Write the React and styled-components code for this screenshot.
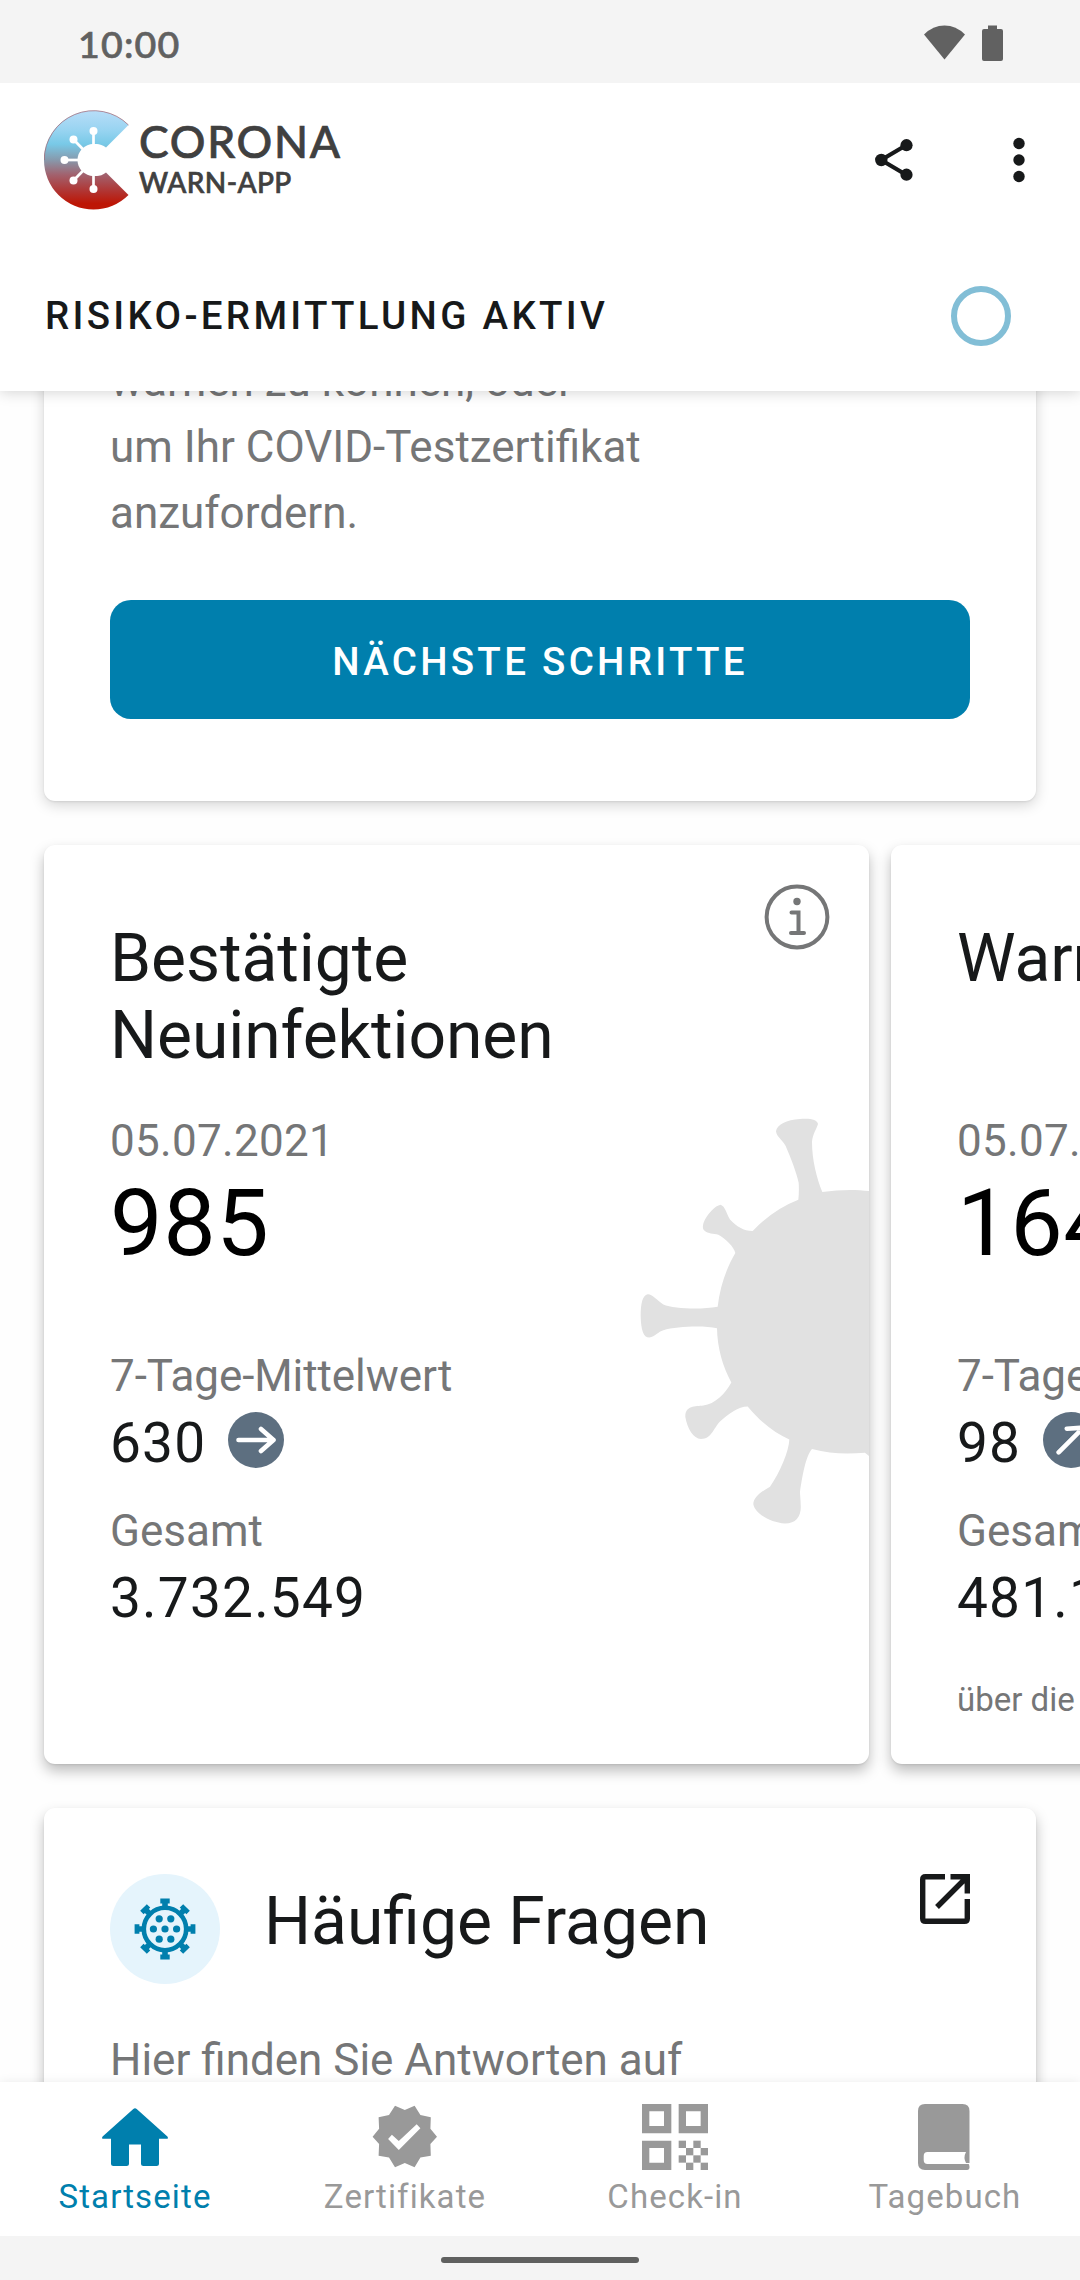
import React from 'react';
import styled, { createGlobalStyle, css } from 'styled-components';

const GlobalStyle = createGlobalStyle`
  * { box-sizing: border-box; }
  body { margin: 0; background: #fefefe; font-family: Roboto, "Noto Sans", sans-serif; color: #17191a; }
  h2, p { margin: 0; font-weight: 400; }
  svg { display: block; flex: none; }
`;

const Screen = styled.div`
  width: 1080px;
  height: 2280px;
  display: flex;
  flex-direction: column;
  overflow: hidden;
  background: #fefefe;
`;

const Header = styled.header`
  position: relative;
  z-index: 2;
  flex: none;
  background: #fff;
  box-shadow: 0 1px 14px rgba(0, 0, 0, 0.18);
`;

const StatusBar = styled.div`
  height: 83px;
  padding: 5px 77px 0 78px;
  background: #f4f4f4;
  display: flex;
  align-items: center;
  justify-content: space-between;
`;

const Clock = styled.span`
  font: 500 37.5px/44px Lato, sans-serif;
  color: #616161;
  letter-spacing: 1.2px;
  -webkit-text-stroke: 0.7px #616161;
`;

const StatusIcons = styled.div`
  display: flex;
  gap: 17px;
  margin-top: -3px;
`;

const Toolbar = styled.div`
  height: 154px;
  padding: 0 55px 0 44px;
  display: flex;
  align-items: center;
`;

const Wordmark = styled.div`
  margin-left: 8px;
  flex: 1;
  display: flex;
  flex-direction: column;
  color: #404040;
  font-family: Lato, sans-serif;
  font-weight: 500;
  -webkit-text-stroke: 0.7px #404040;
`;

const WordmarkTop = styled.span`
  font-size: 44.5px;
  line-height: 46px;
  letter-spacing: 1.7px;
  margin: -5px 0 3px;
`;

const WordmarkBottom = styled.span`
  font-size: 28px;
  line-height: 30px;
  letter-spacing: 0.4px;
`;

const ToolbarActions = styled.div`
  display: flex;
  align-items: center;
  gap: 100px;
`;

const RiskRow = styled.div`
  height: 154px;
  padding: 3px 69px 0 45px;
  display: flex;
  align-items: center;
  justify-content: space-between;
  font-size: 38.5px;
  font-weight: 500;
  line-height: 45px;
  letter-spacing: 3.3px;
`;

const Ring = styled.span`
  width: 60px;
  height: 60px;
  border: 6.5px solid #82bed6;
  border-radius: 50%;
`;

const Content = styled.main`
  flex: 1;
  min-height: 0;
  overflow: hidden;
  display: flex;
  flex-direction: column;
  gap: 44px;
`;

const Card = styled.section`
  flex: none;
  background: #fff;
  border-radius: 11px;
  box-shadow: 0 ${(p) => p.$drop || 5}px 14px rgba(0, 0, 0, ${(p) => p.$shade || 0.2}), 0 1px 2px rgba(0, 0, 0, 0.08);
`;

const TestCard = styled(Card)`
  margin: -60px 44px 0;
  padding: 17px 66px 82px;
`;

const Body = styled.p`
  font-size: 44px;
  line-height: 66px;
  color: #757677;
  white-space: pre-line;
  letter-spacing: ${(p) => p.$spacing || 0}px;
  font-variant-ligatures: common-ligatures;
`;

const Button = styled.button`
  display: block;
  width: 100%;
  height: 119px;
  margin-top: 54px;
  padding: 4px 0 0;
  border: 0;
  border-radius: 21px;
  background: #007fad;
  color: #fff;
  font: 500 38.5px/45px Roboto, sans-serif;
  letter-spacing: 3.3px;
`;

const Carousel = styled.div`
  flex: none;
  display: flex;
  gap: 22px;
  padding-left: 44px;
`;

const StatCard = styled(Card)`
  position: relative;
  width: 825px;
  height: 919px;
  padding: 75px 66px 0;
`;

const titleText = css`
  font-size: 66px;
  line-height: 77px;
  color: #17191a;
`;

const StatTitle = styled.h2`
  ${titleText}
  height: 154px;
  margin-bottom: 41px;
  white-space: pre-line;
  letter-spacing: -0.08px;
`;

const Label = styled.p`
  font-size: 44px;
  line-height: 52px;
  color: #757677;
  letter-spacing: ${(p) => p.$spacing || 0}px;
`;

const BigNumber = styled.p`
  margin: 1px 0 72px;
  font-size: 93.5px;
  line-height: 110px;
  letter-spacing: 0.6px;
  color: #000;
`;

const ValueRow = styled.div`
  display: flex;
  align-items: flex-start;
  gap: 21.5px;
  height: 64px;
  margin: 9px 0 30px;
  font-size: 55px;
  line-height: 64px;
  letter-spacing: 1.2px;
`;

const TrendBadge = styled.span`
  flex: none;
  width: 56px;
  height: 56px;
  margin-top: 1px;
  border-radius: 50%;
  background: #5d6f80;
  svg { transform: rotate(${(p) => p.$angle}deg); }
`;

const Footnote = styled.p`
  padding-top: 20px;
  font-size: 33px;
  line-height: 39px;
  color: #757677;
  white-space: nowrap;
`;

const InfoButton = styled.span`
  position: absolute;
  top: 39px;
  right: 39px;
`;

const CardArt = styled.span`
  position: absolute;
  top: 269px;
  right: 0;
`;

const FaqCard = styled(Card)`
  margin: 0 44px;
  padding: 66px 66px 80px;
`;

const FaqHead = styled.div`
  display: flex;
  align-items: flex-start;
  gap: 44px;
  margin-bottom: 43px;
`;

const FaqIcon = styled.span`
  width: 110px;
  height: 110px;
  border-radius: 50%;
  background: #e5f4fc;
`;

const FaqTitle = styled.h2`
  ${titleText}
  flex: 1;
  margin-top: 9px;
`;

const Nav = styled.nav`
  position: relative;
  z-index: 2;
  flex: none;
  height: 154px;
  display: grid;
  grid-template-columns: repeat(4, 1fr);
  background: #fff;
  box-shadow: 0 0 10px rgba(0, 0, 0, 0.08);
`;

const NavItem = styled.div`
  display: flex;
  flex-direction: column;
  align-items: center;
  padding-top: 22px;
  gap: 7px;
  color: ${(p) => (p.$active ? '#007fad' : '#999')};
  font-size: 33px;
  line-height: 39px;
  letter-spacing: 1.1px;
`;

const GestureBar = styled.div`
  position: relative;
  z-index: 3;
  flex: none;
  height: 44px;
  display: flex;
  align-items: center;
  justify-content: center;
  background: #f4f4f4;
`;

const Handle = styled.span`
  width: 198px;
  height: 6px;
  margin-top: 4px;
  border-radius: 3px;
  background: #5f605f;
`;

const WifiIcon = () => (
  <svg width="41" height="36" viewBox="0 0 41 36">
    <path d="M20.5 34.5 0 9.5Q9 .5 20.5 .5T41 9.5Z" fill="#616161" />
  </svg>
);

const BatteryIcon = () => (
  <svg width="21" height="36" viewBox="0 0 21 36">
    <path d="M6 .5h9v3.5h4q2 0 2 2V34q0 2-2 2H2q-2 0-2-2V6q0-2 2-2h4Z" fill="#616161" />
  </svg>
);

const logoSpikes = [[49.5, 21], [29.5, 29.5], [20.5, 50], [29.5, 70.5], [49.5, 79]];

const LogoMark = () => (
  <svg width="87" height="100" viewBox="0 0 87 100">
    <defs>
      <linearGradient id="logo" x1="0" y1="0" x2="0" y2="1">
        <stop offset="0" stopColor="#b8ddf8" />
        <stop offset="0.2" stopColor="#98d4f1" />
        <stop offset="0.34" stopColor="#78c9e7" />
        <stop offset="0.5" stopColor="#8799ac" />
        <stop offset="0.65" stopColor="#a2616d" />
        <stop offset="0.82" stopColor="#b13330" />
        <stop offset="0.94" stopColor="#bd1605" />
        <stop offset="1" stopColor="#bd1605" />
      </linearGradient>
    </defs>
    <path d="M84.5 15A49.5 49.5 0 1 0 84.5 85L62 62.5A16 16 0 1 1 62 37.5Z" fill="url(#logo)" />
    <path d="M84.5 15A49.5 49.5 0 0 0 .2 50" fill="none" stroke="#a4636f" strokeWidth=".7" />
    <g stroke="#fff" strokeWidth="2.7" fill="#fff">
      {logoSpikes.map(([x, y]) => (
        <g key={`${x}-${y}`}>
          <path d={`M49.5 50 ${x} ${y}`} />
          <circle cx={x} cy={y} r="4" stroke="none" />
        </g>
      ))}
    </g>
    <circle cx="49.5" cy="50" r="16" fill="#fff" />
  </svg>
);

const ShareIcon = () => (
  <svg width="38" height="42" viewBox="0 0 38 42" fill="#17191a">
    <path d="M31.5 6 6.2 21l25.3 15" fill="none" stroke="#17191a" strokeWidth="4.2" />
    <circle cx="31.5" cy="6.2" r="6.1" />
    <circle cx="6.3" cy="21" r="6.2" />
    <circle cx="31.5" cy="35.7" r="6.1" />
  </svg>
);

const MoreIcon = () => (
  <svg width="12" height="46" viewBox="0 0 12 46" fill="#17191a">
    <circle cx="6" cy="6.5" r="5.7" />
    <circle cx="6" cy="23" r="5.7" />
    <circle cx="6" cy="39.5" r="5.7" />
  </svg>
);

const InfoIcon = () => (
  <svg width="66" height="66" viewBox="0 0 66 66" fill="none" stroke="#757677" strokeWidth="4">
    <circle cx="33" cy="33" r="30.4" />
    <circle cx="33" cy="17.5" r="3.7" fill="#757677" stroke="none" />
    <path d="M27.5 28.500h7v20M27 49h13" strokeLinecap="round" />
  </svg>
);

const VirusArt = () => (
  <svg width="229" height="412" viewBox="0 0 229 412">
    <g transform="translate(-40 -294) scale(.33333 .4592)">
      <path
        fill="#e1e1e1"
        d="M667 810C650 780 636 740 636 700C638 685 650 672 654 662C652 652 630 649 600 651C560 653 530 663 528 678C530 690 545 695 557 710C575 740 590 770 596 790C597 800 597 815 595 827Q520 848 458 895C430 895 410 885 390 870C378 855 376 842 362 838C345 840 325 857 315 870C308 880 306 890 313 894C325 902 340 900 355 903C375 910 403 930 406 943C380 975 360 1015 353 1060C300 1067 220 1064 190 1055C170 1045 155 1032 143 1033C127 1035 122 1055 122 1080C123 1110 130 1127 148 1127C165 1125 175 1114 190 1111C230 1103 310 1100 351 1107C352 1150 368 1190 394 1225C375 1250 345 1272 310 1275C285 1277 255 1275 256 1300C262 1325 280 1347 303 1348C335 1348 340 1325 360 1310C385 1293 415 1277 443 1277C480 1310 525 1335 568 1349C567 1375 540 1420 510 1452C485 1462 460 1475 460 1490C465 1510 510 1530 555 1532C590 1532 605 1515 602 1490C602 1480 600 1470 600 1463C607 1430 617 1385 636 1370C690 1381 745 1381 795 1378L807 1385V808C765 804 715 805 667 810Z"
      />
    </g>
  </svg>
);

const ArrowIcon = () => (
  <svg width="56" height="56" viewBox="0 0 56 56" fill="none" stroke="#fff" strokeWidth="4.6" strokeLinecap="round" strokeLinejoin="round">
    <path d="M10.5 28h35M33 17l12.5 11L33 39" />
  </svg>
);

const knobAngles = [0, 45, 90, 135, 180, 225, 270, 315];
const virusDots = [[0, 0], [-11.6, 0], [11.6, 0], [-5.8, -10.2], [5.8, -10.2], [-5.8, 10.2], [5.8, 10.2]];

const VirusIcon = () => (
  <svg width="110" height="110" viewBox="-55 -55 110 110" fill="#007fad">
    <circle r="21.2" fill="none" stroke="#007fad" strokeWidth="4.6" />
    {knobAngles.map((a) => (
      <path key={a} transform={`rotate(${a})`} d="M-4.7-30.4H4.7V-25.6H2.8V-22H-2.8V-25.6H-4.7Z" />
    ))}
    {virusDots.map(([x, y]) => (
      <circle key={`${x}/${y}`} cx={x} cy={y} r="3.6" />
    ))}
  </svg>
);

const ExternalIcon = () => (
  <svg width="50" height="50" viewBox="0 0 50 50" fill="none" stroke="#17191a" strokeWidth="5.4">
    <path d="M25 2.7H5.5Q2.7 2.7 2.7 5.5V44.5Q2.7 47.3 5.5 47.3H44.5Q47.3 47.3 47.3 44.5V25" />
    <path d="M30.5 2.7H47.3V19.5M46 4 17 33" />
  </svg>
);

const HomeIcon = () => (
  <svg width="66" height="66" viewBox="0 0 66 66" fill="currentColor">
    <path d="M31.3 5Q33 3.600 34.7 5L65.400 32.500Q66.800 34.800 64.500 34.800H57V59.500Q57 62 54.500 62H41.500Q39 62 39 59.500V40.500H27V59.500Q27 62 24.500 62H11.500Q9 62 9 59.500V34.800H1.500Q-.8 34.800.6 32.500Z" />
  </svg>
);

const BadgeIcon = () => (
  <svg width="66" height="66" viewBox="0 -1 66 66" fill="currentColor">
    <path d="M23 .7 32.800 5 42.600.7 48.400 10 58.800 12.300 58.400 23.700 65 31.700 58.400 39 58.800 50.700 48.400 52.500 42.600 62.300 32.800 58 23 62.300 17 52.500 6.600 50.700 7.100 39 .6 31.700 7.100 23.700 6.600 12.300 17 10Z" />
    <path d="M16.100 34 19.900 29.700 26.800 36 44.700 19.300 48.400 23.300 26.800 45Z" fill="#fff" />
  </svg>
);

const qrCells = [[5, 5], [7, 5], [6, 6], [8, 6], [5, 7], [7, 7], [6, 8], [8, 8]];

const QrIcon = () => (
  <svg width="66" height="66" viewBox="0 0 9 9" fill="currentColor">
    <path fillRule="evenodd" d="M0 0h4v4H0ZM1 1v2h2V1ZM5 0h4v4H5ZM6 1v2h2V1ZM0 5h4v4H0ZM1 6v2h2V6Z" />
    {qrCells.map(([x, y]) => (
      <rect key={`${x}${y}`} x={x} y={y} width="1" height="1" />
    ))}
  </svg>
);

const BookIcon = () => (
  <svg width="54" height="66" viewBox="0 0 54 66" fill="currentColor">
    <path d="M7 0H44.500Q51.500 0 51.500 7V59H50Q51.500 60.500 51.500 63Q51.500 66 49 66H7Q0 66 0 59V7Q0 0 7 0Z" />
    <path d="M9.500 48H48Q45 53.500 48 59H51.500V60H9.500Q5.700 60 5.700 56V52Q5.700 48 9.500 48Z" fill="#fff" />
  </svg>
);

const stats = [
  { title: 'Bestätigte\nNeuinfektionen', date: '05.07.2021', value: '985', average: '630', angle: 0, total: '3.732.549', info: true },
  { title: 'Warnende Personen', date: '05.07.2021', value: '164', average: '98', angle: -45, total: '481.1', note: 'über die' },
];

const tabs = [
  { label: 'Startseite', Icon: HomeIcon, active: true },
  { label: 'Zertifikate', Icon: BadgeIcon },
  { label: 'Check-in', Icon: QrIcon },
  { label: 'Tagebuch', Icon: BookIcon },
];

export default function App() {
  return (
    <Screen>
      <GlobalStyle />
      <Header>
        <StatusBar>
          <Clock>10:00</Clock>
          <StatusIcons>
            <WifiIcon />
            <BatteryIcon />
          </StatusIcons>
        </StatusBar>
        <Toolbar>
          <LogoMark />
          <Wordmark>
            <WordmarkTop>CORONA</WordmarkTop>
            <WordmarkBottom>WARN-APP</WordmarkBottom>
          </Wordmark>
          <ToolbarActions>
            <ShareIcon />
            <MoreIcon />
          </ToolbarActions>
        </Toolbar>
        <RiskRow>
          <span>RISIKO-ERMITTLUNG AKTIV</span>
          <Ring />
        </RiskRow>
      </Header>

      <Content>
        <TestCard $drop={4} $shade={0.17}>
          <Body>{'warnen zu können, oder\num Ihr COVID-Testzertifikat\nanzufordern.'}</Body>
          <Button>NÄCHSTE SCHRITTE</Button>
        </TestCard>

        <Carousel>
          {stats.map((s) => (
            <StatCard key={s.title} $drop={7} $shade={0.26}>
              {s.info && <CardArt><VirusArt /></CardArt>}
              {s.info && <InfoButton><InfoIcon /></InfoButton>}
              <StatTitle>{s.title}</StatTitle>
              <Label $spacing={0.3}>{s.date}</Label>
              <BigNumber>{s.value}</BigNumber>
              <Label $spacing={-0.08}>7-Tage-Mittelwert</Label>
              <ValueRow>
                <span>{s.average}</span>
                <TrendBadge $angle={s.angle}><ArrowIcon /></TrendBadge>
              </ValueRow>
              <Label>Gesamt</Label>
              <ValueRow>{s.total}</ValueRow>
              {s.note && <Footnote>{s.note}</Footnote>}
            </StatCard>
          ))}
        </Carousel>

        <FaqCard $drop={7} $shade={0.26}>
          <FaqHead>
            <FaqIcon><VirusIcon /></FaqIcon>
            <FaqTitle>Häufige Fragen</FaqTitle>
            <ExternalIcon />
          </FaqHead>
          <Body>Hier finden Sie Antworten auf</Body>
        </FaqCard>
      </Content>

      <Nav>
        {tabs.map(({ label, Icon, active }) => (
          <NavItem key={label} $active={active}>
            <Icon />
            <span>{label}</span>
          </NavItem>
        ))}
      </Nav>
      <GestureBar><Handle /></GestureBar>
    </Screen>
  );
}
